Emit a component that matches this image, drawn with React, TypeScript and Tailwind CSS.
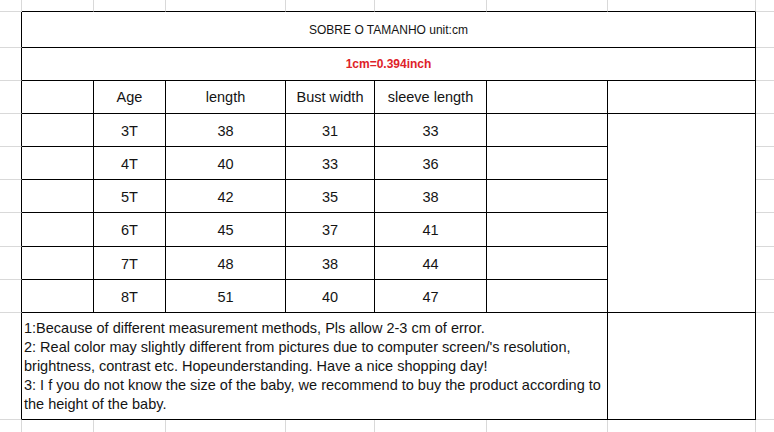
import { Fragment, type ReactNode } from "react";
import clsx from "clsx";

type Edge = "k" | "g" | "n";

const right: Record<Edge, string> = {
  k: "border-r border-r-black",
  g: "border-r border-r-[#d9d9d9]",
  n: "",
};
const bottom: Record<Edge, string> = {
  k: "border-b border-b-black",
  g: "border-b border-b-[#d9d9d9]",
  n: "",
};

function Cell({
  r,
  b,
  className,
  children,
}: {
  r: Edge;
  b: Edge;
  className?: string;
  children?: ReactNode;
}) {
  return (
    <div
      className={clsx(
        "flex items-center justify-center",
        right[r],
        bottom[b],
        className
      )}
    >
      {children}
    </div>
  );
}

const sizes = [
  ["3T", "38", "31", "33"],
  ["4T", "40", "33", "36"],
  ["5T", "42", "35", "38"],
  ["6T", "45", "37", "41"],
  ["7T", "48", "38", "44"],
  ["8T", "51", "40", "47"],
];

export default function App() {
  return (
    <div className="w-[774px] h-[432px] overflow-hidden bg-white text-[#141414] font-['Liberation_Sans',Arial,sans-serif] grid grid-cols-[22px_72px_72px_120px_89px_112px_121px_148px_18px] grid-rows-[12px_36px_33px_33px_33px_33px_33px_34px_33px_33px_107px_12px]">
      {/* top sheet row */}
      <Cell r="g" b="g" />
      <Cell r="g" b="k" />
      <Cell r="g" b="k" />
      <Cell r="g" b="k" />
      <Cell r="g" b="k" />
      <Cell r="g" b="k" />
      <Cell r="g" b="k" />
      <Cell r="g" b="k" />
      <Cell r="n" b="g" />

      {/* title */}
      <Cell r="k" b="g" />
      <Cell r="k" b="k" className="col-span-7 text-[12px]">
        SOBRE O TAMANHO unit:cm
      </Cell>
      <Cell r="n" b="g" />

      <Cell r="k" b="g" />
      <Cell r="k" b="k" className="col-span-7 text-[12px] font-bold text-[#de2229]">
        1cm=0.394inch
      </Cell>
      <Cell r="n" b="g" />

      {/* header */}
      <Cell r="k" b="g" />
      <Cell r="k" b="k" />
      <Cell r="k" b="k" className="text-[14.5px] pt-[2px]">Age</Cell>
      <Cell r="k" b="k" className="text-[14.5px] pt-[2px]">length</Cell>
      <Cell r="k" b="k" className="text-[14.5px] pt-[2px]">Bust width</Cell>
      <Cell r="k" b="k" className="text-[14.5px] pt-[2px]">sleeve length</Cell>
      <Cell r="k" b="k" />
      <Cell r="k" b="k" />
      <Cell r="n" b="g" />

      {sizes.map((row, i) => (
        <Fragment key={row[0]}>
          <Cell r="k" b="g" />
          <Cell r="k" b="k" />
          {row.map((v, j) => (
            <Cell key={j} r="k" b="k" className="text-[14.5px] pt-[3px]">
              {v}
            </Cell>
          ))}
          <Cell r="k" b="k" />
          {i === 0 && <Cell r="k" b="k" className="row-span-6" />}
          <Cell r="n" b="g" />
        </Fragment>
      ))}

      {/* notes */}
      <Cell r="k" b="g" />
      <Cell
        r="k"
        b="k"
        className="col-span-6 flex-col !items-start !justify-center pl-[2px] text-[14.5px] leading-[19px] whitespace-nowrap"
      >
        <div>1:Because of different measurement methods, Pls allow 2-3 cm of error.</div>
        <div>2: Real color may slightly different from pictures due to computer screen/'s resolution,</div>
        <div>brightness, contrast etc. Hopeunderstanding. Have a nice shopping day!</div>
        <div>3: I f you do not know the size of the baby, we recommend to buy the product according to</div>
        <div>the height of the baby.</div>
      </Cell>
      <Cell r="k" b="k" />
      <Cell r="n" b="g" />

      {/* bottom sheet row */}
      <Cell r="g" b="n" />
      <Cell r="g" b="n" />
      <Cell r="g" b="n" />
      <Cell r="g" b="n" />
      <Cell r="g" b="n" />
      <Cell r="g" b="n" />
      <Cell r="g" b="n" />
      <Cell r="g" b="n" />
      <Cell r="n" b="n" />
    </div>
  );
}
